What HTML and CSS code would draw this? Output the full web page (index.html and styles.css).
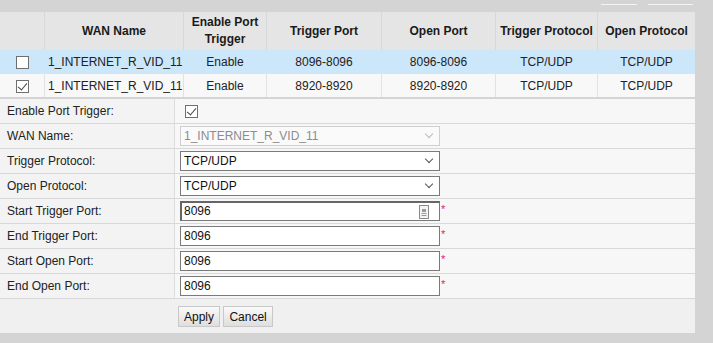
FILE: index.html
```html
<!DOCTYPE html>
<html lang="en">
<head>
  <meta charset="UTF-8">
  <title>Port Trigger</title>
  <link rel="stylesheet" href="styles.css">
</head>
<body>

  <div class="toolbar">
    <span class="tool-btn add"></span>
    <span class="tool-btn del"></span>
  </div>

  <div class="panel">
    <table class="list">
      <thead>
        <tr>
          <th class="c-check"></th>
          <th class="c-name">WAN Name</th>
          <th class="c-enable">Enable Port<br>Trigger</th>
          <th class="c-tport">Trigger Port</th>
          <th class="c-oport">Open Port</th>
          <th class="c-tproto">Trigger Protocol</th>
          <th class="c-oproto">Open Protocol</th>
        </tr>
      </thead>
      <tbody>
        <tr class="selected">
          <td><span class="box"></span></td>
          <td class="left">1_INTERNET_R_VID_11</td>
          <td>Enable</td>
          <td>8096-8096</td>
          <td>8096-8096</td>
          <td>TCP/UDP</td>
          <td>TCP/UDP</td>
        </tr>
        <tr>
          <td><span class="box checked"></span></td>
          <td class="left">1_INTERNET_R_VID_11</td>
          <td>Enable</td>
          <td>8920-8920</td>
          <td>8920-8920</td>
          <td>TCP/UDP</td>
          <td>TCP/UDP</td>
        </tr>
      </tbody>
    </table>

    <table class="form">
      <tr>
        <td class="label">Enable Port Trigger:</td>
        <td class="value"><span class="box checked"></span></td>
      </tr>
      <tr>
        <td class="label">WAN Name:</td>
        <td class="value"><div class="select disabled">1_INTERNET_R_VID_11<span class="arrow"></span></div></td>
      </tr>
      <tr>
        <td class="label">Trigger Protocol:</td>
        <td class="value"><div class="select">TCP/UDP<span class="arrow"></span></div></td>
      </tr>
      <tr>
        <td class="label">Open Protocol:</td>
        <td class="value"><div class="select">TCP/UDP<span class="arrow"></span></div></td>
      </tr>
      <tr>
        <td class="label">Start Trigger Port:</td>
        <td class="value">
          <div class="field focus">8096
            <svg class="key" width="10" height="14" viewBox="0 0 10 14">
              <rect x="0.5" y="0.5" width="9" height="13" fill="#f4f4f4" stroke="#8a8a8a"/>
              <rect x="3" y="4" width="4" height="3" fill="#9a9a9a"/>
              <rect x="2.5" y="8" width="5" height="1" fill="#9a9a9a"/>
              <rect x="2.5" y="10" width="5" height="1" fill="#9a9a9a"/>
            </svg>
          </div><span class="req">*</span>
        </td>
      </tr>
      <tr>
        <td class="label">End Trigger Port:</td>
        <td class="value"><div class="field">8096</div><span class="req">*</span></td>
      </tr>
      <tr>
        <td class="label">Start Open Port:</td>
        <td class="value"><div class="field">8096</div><span class="req">*</span></td>
      </tr>
      <tr>
        <td class="label">End Open Port:</td>
        <td class="value"><div class="field">8096</div><span class="req">*</span></td>
      </tr>
    </table>

    <div class="actions">
      <button class="btn">Apply</button>
      <button class="btn">Cancel</button>
    </div>
  </div>

</body>
</html>
```

FILE: styles.css
```css
body {
  margin: 0;
  background-color: #d4d4d4;
  font-family: "Liberation Sans", Arial, sans-serif;
  font-size: 12px;
  color: #222;
  width: 713px;
  height: 343px;
  overflow: hidden;
}

.toolbar {
  height: 12px;
  position: relative;
}

.tool-btn {
  position: absolute;
  top: 0;
  height: 4px;
  border-bottom: 1px solid #f4f4f4;
}

.tool-btn.add {
  left: 601px;
  width: 36px;
}

.tool-btn.del {
  left: 648px;
  width: 45px;
}

.panel {
  width: 695px;
}

table {
  border-collapse: collapse;
  width: 100%;
}

.list th {
  height: 38px;
  padding: 0;
  background-color: #e5e5e5;
  border-right: 1px solid #d8d8d8;
  font-weight: bold;
  text-align: center;
  line-height: 17px;
  color: #1a1a1a;
}

.list th:last-child,
.list td:last-child {
  border-right: none;
}

.c-check { width: 44px; }
.c-name { width: 138px; }
.c-enable { width: 82px; }
.c-tport { width: 114px; }
.c-oport { width: 113px; }
.c-tproto { width: 101px; }

.list td {
  height: 23px;
  padding: 0;
  text-align: center;
  border-right: 1px solid #e2e2e2;
  background-color: #f8f8f8;
  border-bottom: 1px solid #e2e2e2;
}

.list td.left {
  text-align: left;
  padding-left: 3px;
}

.list tr.selected td {
  background-color: #cce6fa;
  border-right-color: #cce6fa;
  border-bottom-color: #cce6fa;
}

.list tbody tr:last-child td {
  border-bottom: 2px solid #d4d4d4;
}

.box {
  display: inline-block;
  width: 11px;
  height: 11px;
  border: 1px solid #6f6f6f;
  background: #fff;
  vertical-align: middle;
  position: relative;
}

.box.checked::after {
  content: "";
  position: absolute;
  left: 3px;
  top: 0;
  width: 4px;
  height: 8px;
  border: solid #444;
  border-width: 0 1px 1px 0;
  transform: rotate(40deg);
}

.form td {
  height: 24px;
  padding: 0;
  border-bottom: 1px solid #d8d8d8;
  background-color: #f7f7f7;
}

.form td.label {
  width: 167px;
  padding-left: 7px;
  background-color: #f3f3f3;
  border-right: 1px solid #dddddd;
}

.form td.value {
  padding-left: 5px;
}

.form td.value .box {
  margin-left: 5px;
}

.select,
.field {
  display: inline-block;
  vertical-align: middle;
  box-sizing: border-box;
  width: 260px;
  height: 20px;
  line-height: 18px;
  padding-left: 3px;
  border: 1px solid #7a7a7a;
  background: #fff;
  position: relative;
  color: #111;
}

.select.disabled {
  border-color: #cfcfcf;
  color: #8c8c8c;
  background: #fafafa;
}

.arrow {
  position: absolute;
  right: 7px;
  top: 4px;
  width: 5px;
  height: 5px;
  border: solid #555;
  border-width: 0 1px 1px 0;
  transform: rotate(45deg);
}

.select.disabled .arrow {
  border-color: #bbb;
}

.field.focus {
  border-top: 2px solid #666;
  border-left: 2px solid #666;
  line-height: 17px;
  padding-left: 2px;
}

.key {
  position: absolute;
  right: 10px;
  top: 2px;
}

.req {
  color: #d9285d;
  margin-left: 1px;
  vertical-align: middle;
  font-size: 11px;
  position: relative;
  top: -2px;
}

.actions {
  height: 34px;
  background-color: #f0f0f0;
  padding-left: 178px;
  box-sizing: border-box;
  padding-top: 7px;
}

.btn {
  font-family: "Liberation Sans", Arial, sans-serif;
  font-size: 12px;
  height: 21px;
  padding: 0 5px;
  margin-right: 0;
  border: 1px solid #c8c8c8;
  background: linear-gradient(#fafafa, #dedede);
  color: #111;
}
```
